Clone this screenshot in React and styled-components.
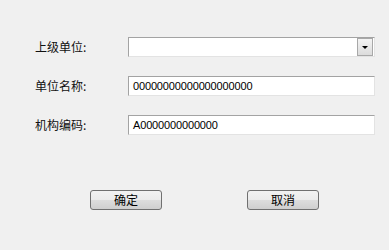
import React from 'react';
import styled, { createGlobalStyle } from 'styled-components';

const GlobalStyle = createGlobalStyle`
  html, body {
    margin: 0;
    padding: 0;
    background: #f0f0f0;
  }
  body {
    font-family: "Liberation Sans", "Noto Sans CJK SC", sans-serif;
    font-size: 12px;
    color: #000;
  }
`;

const Dialog = styled.div`
  width: 389px;
  height: 250px;
  box-sizing: border-box;
  padding-top: 37px;
  background: #f0f0f0;
`;

const Form = styled.div`
  display: grid;
  grid-template-columns: 93px 247px;
  grid-auto-rows: 20px;
  row-gap: 19px;
  padding-left: 35px;
`;

const Label = styled.div`
  display: flex;
  align-items: center;
  font-family: "Noto Sans CJK SC", sans-serif;
  font-size: 12px;
  line-height: 20px;
  color: #111;
`;

const Field = styled.div`
  box-sizing: border-box;
  height: 20px;
  display: flex;
  align-items: center;
  background: #fff;
  border-top: 1px solid #a3a3a3;
  border-left: 1px solid #a3a3a3;
  border-right: 1px solid #e3e3e3;
  border-bottom: 1px solid #e3e3e3;
  padding-left: ${(props) => (props.$combo ? 0 : '4px')};
  font-family: "Liberation Sans", sans-serif;
  font-size: 11px;
  letter-spacing: -0.15px;
  overflow: hidden;
  white-space: nowrap;
`;

const ComboText = styled.div`
  flex: 1;
`;

const DropButton = styled.div`
  box-sizing: border-box;
  width: 16px;
  height: 18px;
  margin-right: 1px;
  border: 1px solid #a8a8a8;
  background: linear-gradient(#f4f4f4, #dcdcdc);
  display: flex;
  align-items: center;
  justify-content: center;
`;

const Arrow = styled.div`
  width: 0;
  height: 0;
  border-left: 3px solid transparent;
  border-right: 3px solid transparent;
  border-top: 3px solid #000;
  margin-top: 1px;
`;

const Buttons = styled.div`
  display: flex;
  gap: 85px;
  padding-left: 90px;
  margin-top: 55px;
`;

const Button = styled.button`
  box-sizing: border-box;
  width: 72px;
  height: 20px;
  padding: 0;
  border: 1px solid #707070;
  border-radius: 3px;
  background: linear-gradient(#f2f2f2 0%, #ebebeb 50%, #dddddd 51%, #cfcfcf 100%);
  font-family: "Noto Sans CJK SC", sans-serif;
  font-size: 12px;
  line-height: 18px;
  color: #000;
`;

export default function App() {
  return (
    <>
      <GlobalStyle />
      <Dialog>
        <Form>
          <Label>上级单位:</Label>
          <Field $combo>
            <ComboText />
            <DropButton>
              <Arrow />
            </DropButton>
          </Field>
          <Label>单位名称:</Label>
          <Field>00000000000000000000</Field>
          <Label>机构编码:</Label>
          <Field>A0000000000000</Field>
        </Form>
        <Buttons>
          <Button>确定</Button>
          <Button>取消</Button>
        </Buttons>
      </Dialog>
    </>
  );
}
